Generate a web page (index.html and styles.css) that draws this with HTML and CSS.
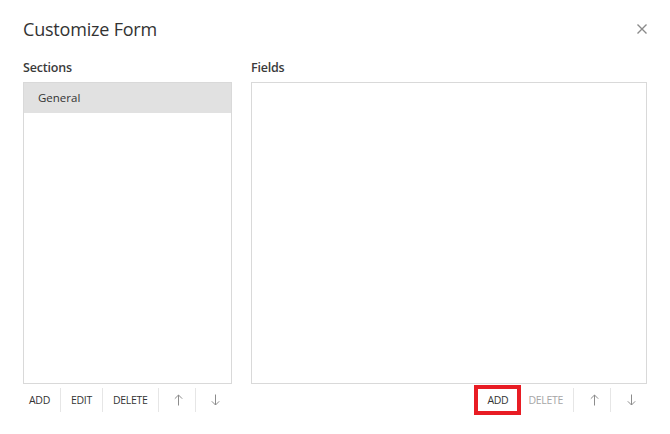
FILE: index.html
```html
<!DOCTYPE html>
<html>
<head>
<meta charset="utf-8">
<link rel="stylesheet" href="styles.css">
</head>
<body>
<div class="dialog">
  <div class="header">
    <h1 class="title">Customize Form</h1>
    <button class="close" aria-label="Close">
      <svg width="10" height="10" viewBox="0 0 10 10"><path d="M0.5 0.5L9.5 9.5M9.5 0.5L0.5 9.5" stroke="#8a8a8a" stroke-width="1.4" fill="none"/></svg>
    </button>
  </div>
  <div class="columns">
    <div class="col col-sections">
      <div class="label">Sections</div>
      <div class="listbox">
        <div class="item selected">General</div>
      </div>
      <div class="toolbar">
        <button class="tb">ADD</button>
        <button class="tb">EDIT</button>
        <button class="tb">DELETE</button>
        <button class="tb arrow" aria-label="Move up"><svg width="9" height="12" viewBox="0 0 9 12"><path d="M4.5 11.5V1M0.8 4.7L4.5 1L8.2 4.7" stroke="#8c8c8c" stroke-width="1" fill="none"/></svg></button>
        <button class="tb arrow" aria-label="Move down"><svg width="9" height="12" viewBox="0 0 9 12"><path d="M4.5 0.5V11M0.8 7.3L4.5 11L8.2 7.3" stroke="#8c8c8c" stroke-width="1" fill="none"/></svg></button>
      </div>
    </div>
    <div class="col col-fields">
      <div class="label">Fields</div>
      <div class="listbox"></div>
      <div class="toolbar right">
        <button class="tb highlight">ADD</button>
        <button class="tb disabled">DELETE</button>
        <button class="tb arrow" aria-label="Move up"><svg width="9" height="12" viewBox="0 0 9 12"><path d="M4.5 11.5V1M0.8 4.7L4.5 1L8.2 4.7" stroke="#8c8c8c" stroke-width="1" fill="none"/></svg></button>
        <button class="tb arrow" aria-label="Move down"><svg width="9" height="12" viewBox="0 0 9 12"><path d="M4.5 0.5V11M0.8 7.3L4.5 11L8.2 7.3" stroke="#8c8c8c" stroke-width="1" fill="none"/></svg></button>
      </div>
    </div>
  </div>
</div>
</body>
</html>
```
FILE: styles.css
```css
* { box-sizing: border-box; }
html, body { margin: 0; padding: 0; background: #fff; }
body {
  font-family: "Open Sans", "Noto Sans", sans-serif;
  color: #333;
  width: 670px;
  height: 434px;
  overflow: hidden;
}
.dialog {
  padding: 16px 23px 0 23px;
}
.header {
  display: flex;
  justify-content: space-between;
  align-items: center;
  height: 26px;
}
.title {
  margin: 0;
  font-size: 18px;
  font-weight: 400;
  color: #333;
  letter-spacing: -0.2px;
}
.close {
  border: 0;
  background: none;
  padding: 0;
  width: 10px;
  height: 10px;
  display: flex;
}
.columns {
  display: grid;
  grid-template-columns: 209px 396px;
  column-gap: 19px;
  margin-top: 16px;
}
.label {
  font-size: 12.5px;
  font-weight: 600;
  color: #3a3a3a;
  line-height: 16px;
  height: 24px;
  padding-top: 2px;
  letter-spacing: -0.2px;
}
.listbox {
  height: 302px;
  border: 1px solid #d9d9d9;
  background: #fff;
}
.item {
  height: 30px;
  line-height: 30px;
  padding-left: 14px;
  font-size: 11.5px;
  color: #333;
}
.item.selected { background: #e1e1e1; }
.toolbar {
  display: flex;
  align-items: center;
  margin-top: 4px;
  margin-left: -4px;
  height: 24px;
}
.toolbar.right {
  justify-content: flex-end;
  margin-left: 0;
}
.tb {
  font-family: "Open Sans", "Noto Sans", sans-serif;
  font-size: 10.5px;
  color: #333;
  background: none;
  border: 0;
  padding: 0 10px;
  height: 24px;
  line-height: 24px;
  letter-spacing: -0.3px;
  display: flex;
  align-items: center;
}
.tb + .tb { border-left: 1px solid #e6e6e6; }
.tb.arrow {
  width: 37px;
  justify-content: center;
  padding: 0 0 0 4px;
}
.tb.disabled { color: #a6a6a6; }
.tb.highlight {
  outline: 4px solid #e81c24;
  outline-offset: -1px;
}
.tb.highlight + .tb { border-left: 0; }
```
